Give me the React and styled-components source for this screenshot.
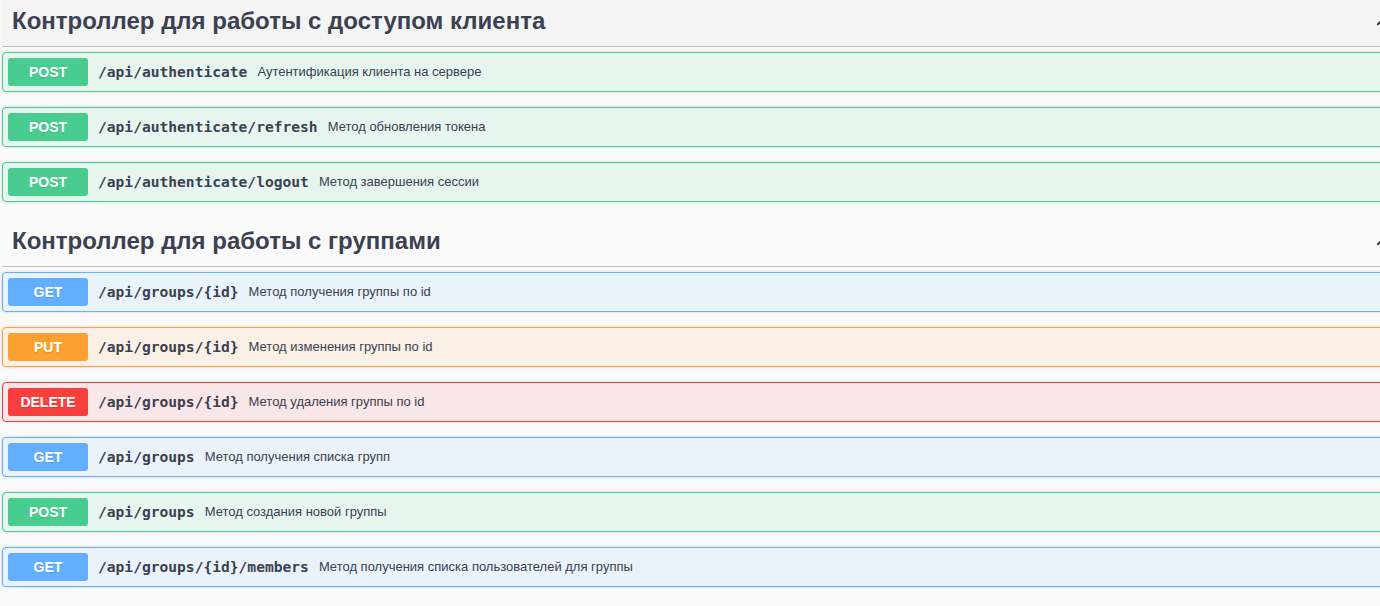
import React from "react";
import styled, { createGlobalStyle } from "styled-components";

const Global = createGlobalStyle`
  html, body { margin: 0; padding: 0; background: #fafafa; overflow: hidden; }
  body { font-family: "Liberation Sans", Arial, sans-serif; }
`;

const METHODS = {
  POST: { c: "#49cc90", bg: "rgba(73,204,144,.1)" },
  GET: { c: "#61affe", bg: "rgba(97,175,254,.1)" },
  PUT: { c: "#fca130", bg: "rgba(252,161,48,.1)" },
  DELETE: { c: "#f93e3e", bg: "rgba(249,62,62,.1)" },
};

const Page = styled.div`
  width: 1411px;
  padding: 0 0 0 2px;
`;

const Section = styled.section`
  display: flow-root;
  margin-bottom: 3px;
`;

const Tag = styled.h3`
  display: flex;
  align-items: center;
  margin: 0 0 5px;
  padding: 8px 20px 12px 10px;
  border-bottom: 1px solid rgba(59, 65, 81, 0.3);
  background: ${(p) => (p.$hover ? "#f4f4f4" : "transparent")};
  font-family: "Liberation Sans", Arial, sans-serif;
  font-size: 24px;
  line-height: 26px;
  font-weight: 700;
  color: #3b4151;
`;

const TagTitle = styled.span`
  flex: 1;
`;

const Arrow = styled.svg`
  width: 20px;
  height: 20px;
  flex: none;
  margin-top: 2px;
`;

const Block = styled.div`
  display: flex;
  align-items: center;
  margin: 0 0 15px;
  padding: 5px;
  border: 1px solid ${(p) => METHODS[p.$m].c};
  border-radius: 4px;
  background: ${(p) => METHODS[p.$m].bg};
  box-shadow: 0 0 3px rgba(0, 0, 0, 0.19);
`;

const Method = styled.span`
  min-width: 80px;
  padding: 6px 0;
  border-radius: 3px;
  background: ${(p) => METHODS[p.$m].c};
  color: #fff;
  font-family: "Liberation Sans", Arial, sans-serif;
  font-size: 14px;
  line-height: 16px;
  font-weight: 700;
  text-align: center;
  text-shadow: 0 1px 0 rgba(0, 0, 0, 0.1);
`;

const Path = styled.span`
  padding: 0 10px 1px;
  font-family: "DejaVu Sans Mono", "Liberation Mono", monospace;
  font-size: 14.6px;
  font-weight: 700;
  color: #3b4151;
`;

const Desc = styled.span`
  padding-bottom: 2px;
  font-family: "Liberation Sans", Arial, sans-serif;
  font-size: 13px;
  color: #3b4151;
`;

const sections = [
  {
    title: "Контроллер для работы с доступом клиента",
    hover: true,
    ops: [
      ["POST", "/api/authenticate", "Аутентификация клиента на сервере"],
      ["POST", "/api/authenticate/refresh", "Метод обновления токена"],
      ["POST", "/api/authenticate/logout", "Метод завершения сессии"],
    ],
  },
  {
    title: "Контроллер для работы с группами",
    hover: false,
    ops: [
      ["GET", "/api/groups/{id}", "Метод получения группы по id"],
      ["PUT", "/api/groups/{id}", "Метод изменения группы по id"],
      ["DELETE", "/api/groups/{id}", "Метод удаления группы по id"],
      ["GET", "/api/groups", "Метод получения списка групп"],
      ["POST", "/api/groups", "Метод создания новой группы"],
      ["GET", "/api/groups/{id}/members", "Метод получения списка пользователей для группы"],
    ],
  },
];

export default function App() {
  return (
    <>
      <Global />
      <Page>
        {sections.map((s) => (
          <Section key={s.title}>
            <Tag $hover={s.hover}>
              <TagTitle>{s.title}</TagTitle>
              <Arrow viewBox="0 0 20 20">
                <path fill="#333" d="M14.95 13.56 10 8.6l-4.95 4.96-1.41-1.41L10 5.78l6.36 6.37z" />
              </Arrow>
            </Tag>
            {s.ops.map(([m, p, d], i) => (
              <Block key={i} $m={m}>
                <Method $m={m}>{m}</Method>
                <Path>{p}</Path>
                <Desc>{d}</Desc>
              </Block>
            ))}
          </Section>
        ))}
      </Page>
    </>
  );
}
